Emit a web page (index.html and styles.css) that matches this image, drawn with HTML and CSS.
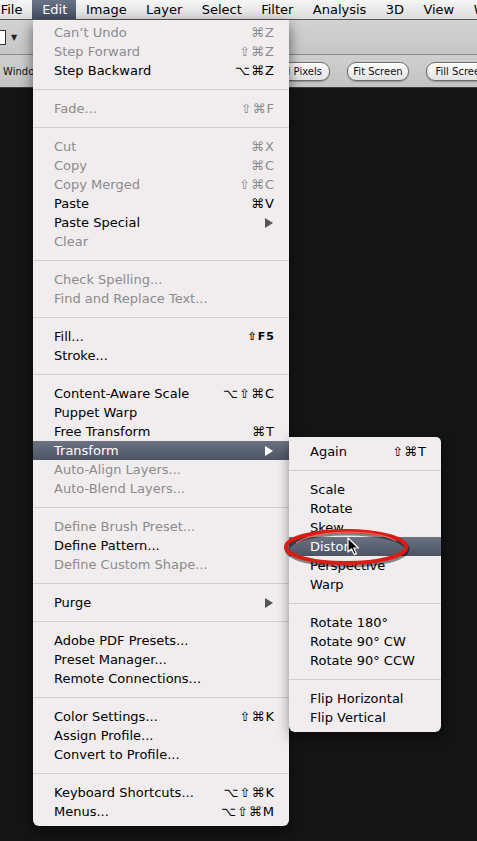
FILE: index.html
```html
<!DOCTYPE html>
<html lang="en">
<head>
  <meta charset="UTF-8">
  <meta name="viewport" content="width=device-width, initial-scale=1.0">
  <title>Edit menu - Transform</title>
  <link rel="stylesheet" href="styles.css">
</head>
<body>
  <div class="menubar">
    <span class="title">File</span>
    <span class="title active">Edit</span>
    <span class="title">Image</span>
    <span class="title">Layer</span>
    <span class="title">Select</span>
    <span class="title">Filter</span>
    <span class="title">Analysis</span>
    <span class="title">3D</span>
    <span class="title">View</span>
    <span class="title">Window</span>
  </div>

  <div class="toolbar">
    <span class="doc-icon"></span>
    <span class="drop">▼</span>
  </div>

  <div class="options">
    <span class="opt-label">Windows</span>
    <span class="pill">Actual Pixels</span>
    <span class="pill">Fit Screen</span>
    <span class="pill">Fill Screen</span>
  </div>

  <div class="canvas"></div>

  <!-- Edit menu -->
  <ul class="menu edit-menu">
    <li class="item off"><span>Can’t Undo</span><span class="key">⌘Z</span></li>
    <li class="item off"><span>Step Forward</span><span class="key">⇧⌘Z</span></li>
    <li class="item"><span>Step Backward</span><span class="key">⌥⌘Z</span></li>
    <li class="sep"></li>
    <li class="item off"><span>Fade...</span><span class="key">⇧⌘F</span></li>
    <li class="sep"></li>
    <li class="item off"><span>Cut</span><span class="key">⌘X</span></li>
    <li class="item off"><span>Copy</span><span class="key">⌘C</span></li>
    <li class="item off"><span>Copy Merged</span><span class="key">⇧⌘C</span></li>
    <li class="item"><span>Paste</span><span class="key">⌘V</span></li>
    <li class="item"><span>Paste Special</span><span class="arrow"></span></li>
    <li class="item off"><span>Clear</span></li>
    <li class="sep"></li>
    <li class="item off"><span>Check Spelling...</span></li>
    <li class="item off"><span>Find and Replace Text...</span></li>
    <li class="sep"></li>
    <li class="item"><span>Fill...</span><span class="key small">⇧F5</span></li>
    <li class="item"><span>Stroke...</span></li>
    <li class="sep"></li>
    <li class="item"><span>Content-Aware Scale</span><span class="key">⌥⇧⌘C</span></li>
    <li class="item"><span>Puppet Warp</span></li>
    <li class="item"><span>Free Transform</span><span class="key">⌘T</span></li>
    <li class="item hl"><span>Transform</span><span class="arrow"></span></li>
    <li class="item off"><span>Auto-Align Layers...</span></li>
    <li class="item off"><span>Auto-Blend Layers...</span></li>
    <li class="sep"></li>
    <li class="item off"><span>Define Brush Preset...</span></li>
    <li class="item"><span>Define Pattern...</span></li>
    <li class="item off"><span>Define Custom Shape...</span></li>
    <li class="sep"></li>
    <li class="item"><span>Purge</span><span class="arrow"></span></li>
    <li class="sep"></li>
    <li class="item"><span>Adobe PDF Presets...</span></li>
    <li class="item"><span>Preset Manager...</span></li>
    <li class="item"><span>Remote Connections...</span></li>
    <li class="sep"></li>
    <li class="item"><span>Color Settings...</span><span class="key">⇧⌘K</span></li>
    <li class="item"><span>Assign Profile...</span></li>
    <li class="item"><span>Convert to Profile...</span></li>
    <li class="sep"></li>
    <li class="item"><span>Keyboard Shortcuts...</span><span class="key">⌥⇧⌘K</span></li>
    <li class="item"><span>Menus...</span><span class="key">⌥⇧⌘M</span></li>
  </ul>

  <!-- Transform submenu -->
  <ul class="menu sub-menu">
    <li class="item"><span>Again</span><span class="key">⇧⌘T</span></li>
    <li class="sep"></li>
    <li class="item"><span>Scale</span></li>
    <li class="item"><span>Rotate</span></li>
    <li class="item"><span>Skew</span></li>
    <li class="item hl"><span>Distort</span></li>
    <li class="item"><span>Perspective</span></li>
    <li class="item"><span>Warp</span></li>
    <li class="sep"></li>
    <li class="item"><span>Rotate 180°</span></li>
    <li class="item"><span>Rotate 90° CW</span></li>
    <li class="item"><span>Rotate 90° CCW</span></li>
    <li class="sep"></li>
    <li class="item"><span>Flip Horizontal</span></li>
    <li class="item"><span>Flip Vertical</span></li>
  </ul>

  <!-- red marker round Distort -->
  <svg class="ring" width="140" height="46" viewBox="0 0 140 46">
    <ellipse cx="64" cy="21" rx="60" ry="16" fill="none" stroke="rgba(0,0,0,0.45)" stroke-width="5" transform="translate(1,2)"/>
    <ellipse cx="64" cy="21" rx="60" ry="16" fill="none" stroke="#de1a14" stroke-width="4"/>
    <path d="M14 17 Q30 7 64 6 Q98 6 114 15" fill="none" stroke="#f36a5c" stroke-width="1.2"/>
  </svg>

  <svg class="cursor" width="13" height="19" viewBox="0 0 13 19">
    <path d="M1 1 L1 15 L4.5 11.8 L7.2 17.6 L9.4 16.6 L6.8 11 L11.4 11 Z" fill="#000" stroke="#fff" stroke-width="1.2" stroke-linejoin="round"/>
  </svg>
</body>
</html>
```

FILE: styles.css
```css
body {
  margin: 0;
  width: 477px;
  height: 841px;
  overflow: hidden;
  position: relative;
  background: #151515;
  font-family: "DejaVu Sans", "Liberation Sans", sans-serif;
}
.menubar {
  height: 19px;
  display: flex;
  margin-left: -9px;
  background: linear-gradient(#f6f6f6, #dcdcdc);
  border-bottom: 1px solid #555;
  white-space: nowrap;
  overflow: hidden;
}
.title {
  padding: 0 9.7px;
  font-size: 13px;
  line-height: 19px;
  color: #000;
}
.title.active {
  padding: 0 9px 0 10px;
  background: linear-gradient(#6a7488, #434c5f);
  color: #fff;
}
.toolbar {
  height: 34px;
  display: flex;
  align-items: center;
  gap: 5px;
  background: linear-gradient(#d2d2d2, #c6c6c6);
  border-bottom: 1px solid #8a8a8a;
}
.doc-icon {
  width: 5px;
  height: 13px;
  border: 1px solid #333;
  border-left: none;
  background: #fff;
}
.drop {
  font-size: 8px;
  color: #222;
}
.options {
  height: 32px;
  display: grid;
  grid-template-columns: 234px 79px 62px 70px;
  column-gap: 17px;
  align-items: center;
  background: linear-gradient(#cfcfcf, #c3c3c3);
  border-bottom: 1px solid #3a3a3a;
  white-space: nowrap;
  overflow: hidden;
}
.opt-label {
  padding-left: 3px;
  font-size: 10px;
  color: #111;
}
.pill {
  height: 17px;
  line-height: 17px;
  text-align: center;
  font-size: 10px;
  color: #111;
  border: 1px solid #6c6c6c;
  border-radius: 9px;
  background: linear-gradient(#ffffff, #e2e2e2);
  box-shadow: 0 1px 1px rgba(0, 0, 0, 0.25);
}
.menu {
  position: absolute;
  margin: 0;
  list-style: none;
  background: #f1edef;
  font-size: 13px;
  color: #000;
}
.edit-menu {
  left: 33px;
  top: 20px;
  width: 256px;
  padding: 3px 0 5px;
  border-radius: 0 0 6px 6px;
  box-shadow: 0 5px 14px rgba(0, 0, 0, 0.55);
}
.sub-menu {
  left: 289px;
  top: 437px;
  width: 152px;
  padding: 5px 0 5px;
  border-radius: 0 5px 6px 6px;
  box-shadow: 2px 5px 14px rgba(0, 0, 0, 0.55);
}
.item {
  height: 19px;
  line-height: 19px;
  padding: 0 14px 0 21px;
  display: flex;
  justify-content: space-between;
  align-items: center;
  white-space: nowrap;
}
.item.off {
  color: #8b8b8b;
}
.item.hl {
  background: linear-gradient(#6b7382, #4d5564);
  color: #fff;
}
.key {
  letter-spacing: 1px;
}
.key.small {
  font-size: 11px;
  font-weight: bold;
}
.arrow {
  width: 0;
  height: 0;
  margin-right: 2px;
  border-top: 5px solid transparent;
  border-bottom: 5px solid transparent;
  border-left: 8px solid #555;
}
.item.hl .arrow {
  border-left-color: #fff;
}
.sep {
  height: 19px;
  display: flex;
  align-items: center;
}
.sep::before {
  content: "";
  flex: 1;
  height: 1px;
  background: #d2ced0;
}
.ring {
  position: absolute;
  left: 282px;
  top: 526px;
}
.cursor {
  position: absolute;
  left: 347px;
  top: 537px;
}
```
